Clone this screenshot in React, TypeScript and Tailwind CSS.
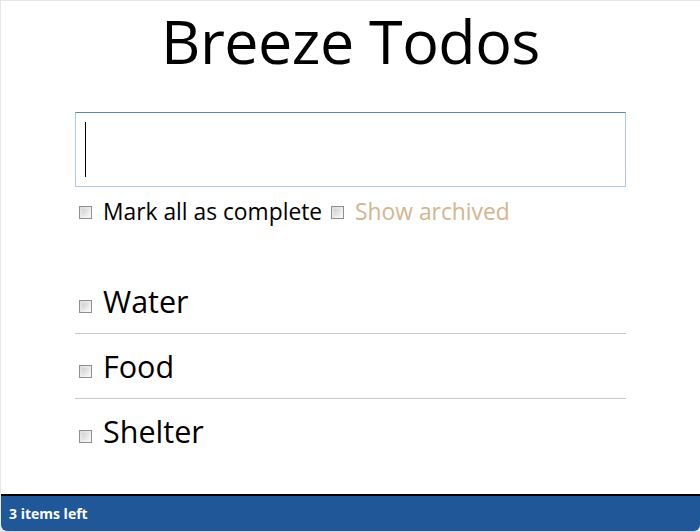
import React from "react";

function Box() {
  return (
    <span className="inline-block w-[13px] h-[13px] border border-[#8f8f8f] bg-gradient-to-br from-[#dcdcdc] to-[#fafafa] shrink-0 p-[2px] align-middle">
      <span className="block w-full h-full bg-gradient-to-br from-[#d0d0d0] to-[#f4f4f4]" />
    </span>
  );
}

export default function App() {
  const items = ["Water", "Food", "Shelter"];
  return (
    <div
      className="h-[532px] w-[700px] flex flex-col border-t border-l border-[#e6e6e6] bg-white overflow-hidden"
      style={{ fontFamily: '"Open Sans", "Noto Sans", sans-serif' }}
    >
      <div className="flex-1 flex flex-col">
        <h1 className="text-center text-[61px] leading-[80px] text-black h-[111px] tracking-[-0.5px]">
          Breeze Todos
        </h1>
        <div className="mx-[74px] h-[75px] border border-[#a9cbe6] border-t-[#5f85a7] relative">
          <div className="absolute left-[9px] top-[9px] w-px h-[55px] bg-black" />
        </div>
        <div className="mx-[74px] mt-[12px] flex items-center h-[26px] text-[22.8px] leading-none">
          <span className="ml-[4px] flex"><Box /></span>
          <span className="ml-[11px] text-black">Mark all as complete</span>
          <span className="ml-[9px] flex"><Box /></span>
          <span className="ml-[11px] text-[#d5b48f]">Show archived</span>
        </div>
        <div className="mx-[74px] mt-[44px]">
          {items.map((t, i) => (
            <div
              key={t}
              className={`flex items-center h-[65px] ${i < items.length - 1 ? "border-b border-[#c6c6c6]" : ""}`}
            >
              <span className="ml-[4px] mt-[10px] flex"><Box /></span>
              <span className="ml-[11px] text-[30.5px] leading-none text-black">{t}</span>
            </div>
          ))}
        </div>
      </div>
      <div className="border-t-2 border-black">
        <div className="h-[35px] bg-[#1f5799] rounded-b-[6px] flex items-center px-[8px] text-white font-bold text-[14px]">
          3 items left
        </div>
        <div className="h-[1px] bg-[#c9d6e3]" />
      </div>
    </div>
  );
}
